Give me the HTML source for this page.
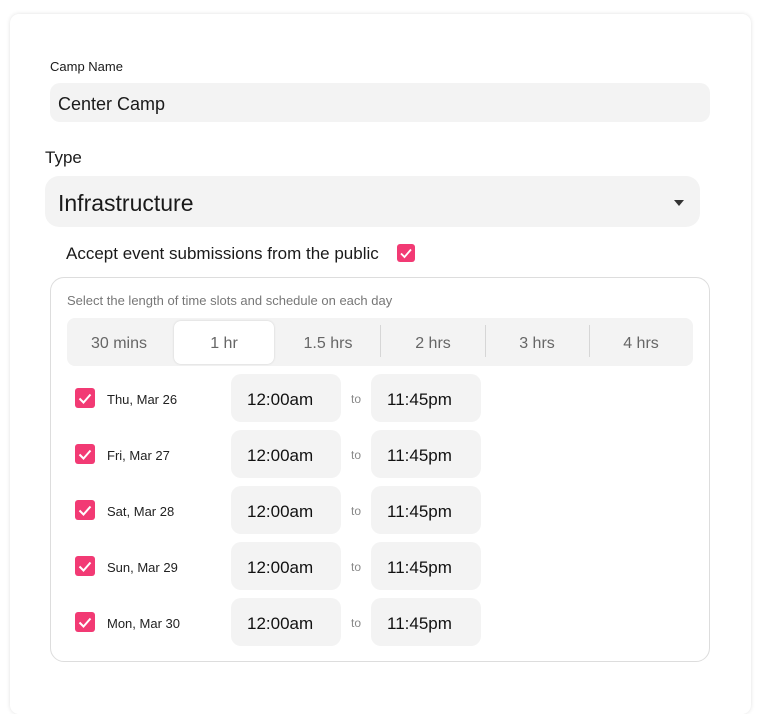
<!DOCTYPE html>
<html><head><style>
*{margin:0;padding:0;box-sizing:border-box}
body{width:765px;height:680px;background:#fff;font-family:"Liberation Sans",sans-serif;position:relative;overflow:hidden;color:#1a1a1a}
.a{position:absolute}
.card{left:10px;top:14px;width:741px;height:700px;border-radius:9px;box-shadow:0 0 4px rgba(0,0,0,0.12);background:#fff}
.in{background:#f3f3f3}
.cb{background:#f23a74;border-radius:3px}
.cb svg{position:absolute;left:0;top:0}
.seg{position:absolute;top:320px;height:48px;line-height:48px;text-align:center;font-size:16px;color:#666;width:104px}
.div{position:absolute;top:325px;width:1px;height:32px;background:#d6d6d6}
.tb{position:absolute;width:110px;height:48px;border-radius:10px;background:#f3f3f3;font-size:17px;line-height:52px;padding-left:16px;color:#111}
.dl{position:absolute;left:107px;font-size:13px;color:#222}
.to{position:absolute;left:351px;font-size:12px;color:#888}
</style></head><body>
<div class="a card"></div>
<div class="a" style="left:50px;top:59px;font-size:13px">Camp Name</div>
<div class="a in" style="left:50px;top:83px;width:660px;height:39px;border-radius:10px;font-size:18px;line-height:42px;padding-left:8px">Center Camp</div>
<div class="a" style="left:45px;top:148px;font-size:17px">Type</div>
<div class="a in" style="left:45px;top:176px;width:655px;height:51px;border-radius:14px;font-size:23px;line-height:55px;padding-left:13px">Infrastructure</div>
<div class="a" style="left:674px;top:200px;width:0;height:0;border-left:5px solid transparent;border-right:5px solid transparent;border-top:6px solid #333"></div>
<div class="a" style="left:66px;top:244px;font-size:17px">Accept event submissions from the public</div>
<div class="a cb" style="left:397px;top:244px;width:18px;height:18px"><svg width="18" height="18"><path d="M4 9.5l3.5 3.5 6.5-7.5" fill="none" stroke="#fff" stroke-width="1.8"/></svg></div>
<div class="a" style="left:50px;top:277px;width:660px;height:385px;border:1px solid #ddd;border-radius:14px"></div>
<div class="a" style="left:67px;top:293px;font-size:13px;color:#777">Select the length of time slots and schedule on each day</div>
<div class="a" style="left:67px;top:318px;width:626px;height:48px;background:#f3f3f3;border-radius:8px"></div>
<div class="a" style="left:174px;top:321px;width:100px;height:43px;background:#fff;border-radius:7px;box-shadow:0 0 2px rgba(0,0,0,0.15)"></div>
<div class="seg" style="left:67px">30 mins</div>
<div class="seg" style="left:172px">1 hr</div>
<div class="seg" style="left:276px">1.5 hrs</div>
<div class="seg" style="left:381px">2 hrs</div>
<div class="seg" style="left:485px">3 hrs</div>
<div class="seg" style="left:589px">4 hrs</div>
<div class="div" style="left:380px"></div>
<div class="div" style="left:485px"></div>
<div class="div" style="left:589px"></div>

<div class="a cb" style="left:75px;top:388px;width:20px;height:20px"><svg width="20" height="20"><path d="M4.5 10.5l4 4 7-8" fill="none" stroke="#fff" stroke-width="2"/></svg></div>
<div class="dl" style="top:392px">Thu, Mar 26</div>
<div class="tb" style="left:231px;top:374px">12:00am</div><div class="to" style="top:392px">to</div><div class="tb" style="left:371px;top:374px">11:45pm</div>

<div class="a cb" style="left:75px;top:444px;width:20px;height:20px"><svg width="20" height="20"><path d="M4.5 10.5l4 4 7-8" fill="none" stroke="#fff" stroke-width="2"/></svg></div>
<div class="dl" style="top:448px">Fri, Mar 27</div>
<div class="tb" style="left:231px;top:430px">12:00am</div><div class="to" style="top:448px">to</div><div class="tb" style="left:371px;top:430px">11:45pm</div>

<div class="a cb" style="left:75px;top:500px;width:20px;height:20px"><svg width="20" height="20"><path d="M4.5 10.5l4 4 7-8" fill="none" stroke="#fff" stroke-width="2"/></svg></div>
<div class="dl" style="top:504px">Sat, Mar 28</div>
<div class="tb" style="left:231px;top:486px">12:00am</div><div class="to" style="top:504px">to</div><div class="tb" style="left:371px;top:486px">11:45pm</div>

<div class="a cb" style="left:75px;top:556px;width:20px;height:20px"><svg width="20" height="20"><path d="M4.5 10.5l4 4 7-8" fill="none" stroke="#fff" stroke-width="2"/></svg></div>
<div class="dl" style="top:560px">Sun, Mar 29</div>
<div class="tb" style="left:231px;top:542px">12:00am</div><div class="to" style="top:560px">to</div><div class="tb" style="left:371px;top:542px">11:45pm</div>

<div class="a cb" style="left:75px;top:612px;width:20px;height:20px"><svg width="20" height="20"><path d="M4.5 10.5l4 4 7-8" fill="none" stroke="#fff" stroke-width="2"/></svg></div>
<div class="dl" style="top:616px">Mon, Mar 30</div>
<div class="tb" style="left:231px;top:598px">12:00am</div><div class="to" style="top:616px">to</div><div class="tb" style="left:371px;top:598px">11:45pm</div>
</body></html>
